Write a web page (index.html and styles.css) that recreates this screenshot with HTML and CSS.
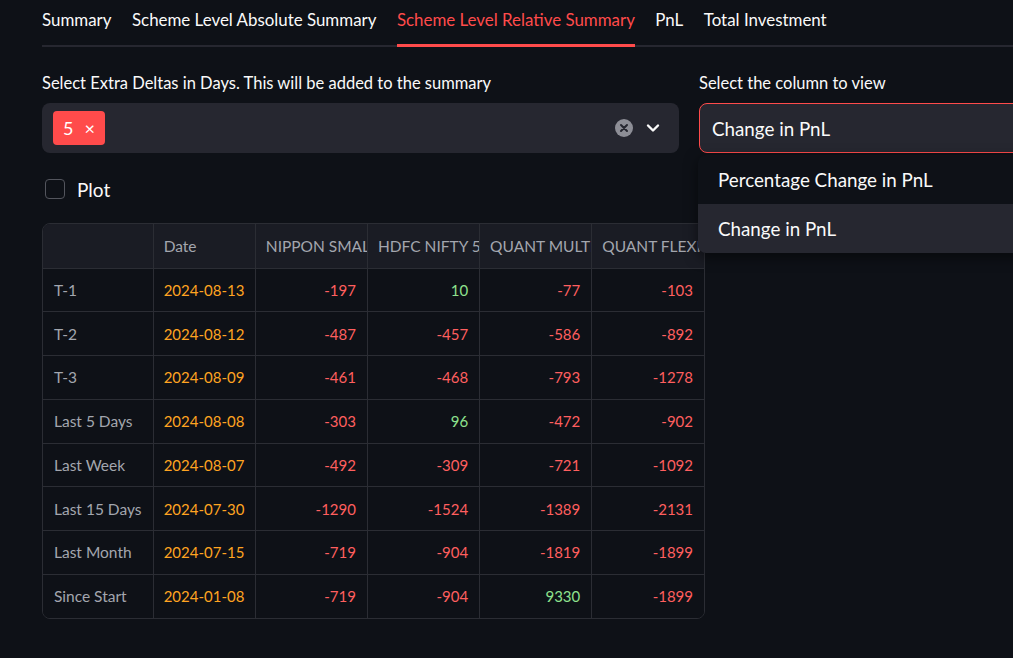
FILE: index.html
```html
<!DOCTYPE html>
<html>
<head>
<meta charset="utf-8">
<link rel="stylesheet" href="styles.css">
</head>
<body>
<div class="main">
  <div class="tabs">
    <div class="tab">Summary</div>
    <div class="tab">Scheme Level Absolute Summary</div>
    <div class="tab active">Scheme Level Relative Summary</div>
    <div class="tab">PnL</div>
    <div class="tab">Total Investment</div>
  </div>
  <div class="cols">
    <div class="col">
      <div class="label">Select Extra Deltas in Days. This will be added to the summary</div>
      <div class="multiselect">
        <div class="tag"><span>5</span><span class="tag-x">×</span></div>
        <div class="ms-icons">
          <svg class="clear" width="18" height="18" viewBox="0 0 18 18"><circle cx="9" cy="9" r="9" fill="#8d8e96"/><path d="M6 6 L12 12 M12 6 L6 12" stroke="#262730" stroke-width="2" stroke-linecap="round"/></svg>
          <svg class="chev" width="14" height="10" viewBox="0 0 14 10"><path d="M2 2.5 L7 7.5 L12 2.5" fill="none" stroke="#fafafa" stroke-width="2.4" stroke-linecap="round" stroke-linejoin="round"/></svg>
        </div>
      </div>
      <label class="check"><span class="box"></span><span>Plot</span></label>
      <div class="grid">
        <table>
          <colgroup>
            <col class="c-idx"><col class="c-date"><col class="c-v"><col class="c-v"><col class="c-v"><col class="c-v">
          </colgroup>
          <thead>
            <tr>
              <th></th>
              <th><div class="h">Date</div></th>
              <th><div class="h">NIPPON SMALL CAP FUND</div></th>
              <th><div class="h">HDFC NIFTY 50 INDEX FUND</div></th>
              <th><div class="h">QUANT MULTI ASSET FUND</div></th>
              <th><div class="h">QUANT FLEXI CAP FUND</div></th>
            </tr>
          </thead>
          <tbody>
            <tr><td class="idx">T-1</td><td class="date">2024-08-13</td><td class="neg">-197</td><td class="pos">10</td><td class="neg">-77</td><td class="neg">-103</td></tr>
            <tr><td class="idx">T-2</td><td class="date">2024-08-12</td><td class="neg">-487</td><td class="neg">-457</td><td class="neg">-586</td><td class="neg">-892</td></tr>
            <tr><td class="idx">T-3</td><td class="date">2024-08-09</td><td class="neg">-461</td><td class="neg">-468</td><td class="neg">-793</td><td class="neg">-1278</td></tr>
            <tr><td class="idx">Last 5 Days</td><td class="date">2024-08-08</td><td class="neg">-303</td><td class="pos">96</td><td class="neg">-472</td><td class="neg">-902</td></tr>
            <tr><td class="idx">Last Week</td><td class="date">2024-08-07</td><td class="neg">-492</td><td class="neg">-309</td><td class="neg">-721</td><td class="neg">-1092</td></tr>
            <tr><td class="idx">Last 15 Days</td><td class="date">2024-07-30</td><td class="neg">-1290</td><td class="neg">-1524</td><td class="neg">-1389</td><td class="neg">-2131</td></tr>
            <tr><td class="idx">Last Month</td><td class="date">2024-07-15</td><td class="neg">-719</td><td class="neg">-904</td><td class="neg">-1819</td><td class="neg">-1899</td></tr>
            <tr><td class="idx">Since Start</td><td class="date">2024-01-08</td><td class="neg">-719</td><td class="neg">-904</td><td class="pos">9330</td><td class="neg">-1899</td></tr>
          </tbody>
        </table>
      </div>
    </div>
    <div class="col">
      <div class="label">Select the column to view</div>
      <div class="select-wrap">
        <div class="select">Change in PnL</div>
        <div class="menu">
          <div class="opt">Percentage Change in PnL</div>
          <div class="opt hl">Change in PnL</div>
        </div>
      </div>
    </div>
  </div>
</div>
</body>
</html>
```

FILE: styles.css
```css
* { box-sizing: border-box; }
html, body {
  margin: 0;
  background: #0e1117;
  overflow: hidden;
  height: 100%;
}
body {
  font-family: "Lato", "Open Sans", sans-serif;
  color: #fafafa;
}
.main {
  padding-left: 42px;
  width: 1400px;
}
.tabs {
  display: flex;
  gap: 20.5px;
  border-bottom: 2px solid #262730;
  height: 47px;
}
.tab {
  font-size: 16.9px;
  line-height: 40px;
  height: 47px;
  white-space: nowrap;
  color: #fafafa;
}
.tab.active {
  color: #ff4b4b;
  border-bottom: 3px solid #ff4b4b;
}
.cols {
  display: grid;
  grid-template-columns: 637px 637px;
  gap: 20px;
  padding-top: 26px;
}
.label {
  font-size: 16.5px;
  line-height: 20px;
  margin-bottom: 10px;
  white-space: nowrap;
}
.multiselect {
  height: 50px;
  background: #262730;
  border-radius: 8px;
  display: flex;
  align-items: center;
  justify-content: space-between;
  padding: 0 19px 0 11px;
}
.tag {
  background: #ff4b4b;
  border-radius: 4px;
  height: 34px;
  width: 52px;
  display: flex;
  align-items: center;
  padding-left: 10px;
  gap: 11px;
  font-size: 18px;
  color: #fff;
}
.tag-x { font-size: 18px; }
.ms-icons {
  display: flex;
  align-items: center;
  gap: 13px;
}
.check {
  display: flex;
  align-items: center;
  gap: 12px;
  margin-top: 26px;
  height: 20px;
  padding-left: 3px;
  font-size: 19px;
}
.box {
  width: 20px;
  height: 20px;
  border: 1px solid #53555d;
  border-radius: 4px;
  background: #0e1117;
}
.grid {
  margin-top: 24px;
  width: 663px;
  border: 1px solid #2b2d34;
  border-radius: 8px;
  overflow: hidden;
}
table {
  border-collapse: collapse;
  table-layout: fixed;
  width: 661px;
  font-size: 15.5px;
}
.c-idx { width: 110px; }
.c-date { width: 102px; }
.c-v { width: 112px; }
th, td {
  border: 1px solid #2b2d34;
  padding: 0;
  white-space: nowrap;
}
tr > :first-child { border-left: none; }
tr > :last-child { border-right: none; }
thead tr th { border-top: none; }
tbody tr:last-child td { border-bottom: none; }
th {
  background: #1a1c24;
  height: 44px;
  font-weight: 400;
  text-align: left;
  color: #a3a6ae;
}
.h {
  padding-left: 10px;
  overflow: hidden;
  text-overflow: clip;
}
td {
  height: 43.75px;
  padding: 0 11px;
  text-align: right;
  background: #0e1117;
}
td.idx {
  text-align: left;
  color: #a3a6ae;
}
td.date {
  text-align: left;
  color: #ffa421;
  font-size: 15px;
  padding-left: 10px;
}
td.neg { color: #ff5f5f; font-size: 15px; }
td.pos { color: #8ee28e; font-size: 15px; }
.select-wrap { position: relative; }
.select {
  height: 50px;
  background: #262730;
  border: 1px solid #ff4b4b;
  border-radius: 8px;
  display: flex;
  align-items: center;
  padding-left: 12px;
  font-size: 18.8px;
}
.menu {
  position: absolute;
  top: 52px;
  left: -1px;
  width: 640px;
  background: #0e1117;
  border-radius: 8px;
  box-shadow: 0 4px 14px rgba(0,0,0,0.5);
  overflow: hidden;
}
.opt {
  height: 49px;
  line-height: 49px;
  padding-left: 20px;
  font-size: 18.8px;
  color: #fafafa;
}
.opt.hl { background: #262730; }
```
